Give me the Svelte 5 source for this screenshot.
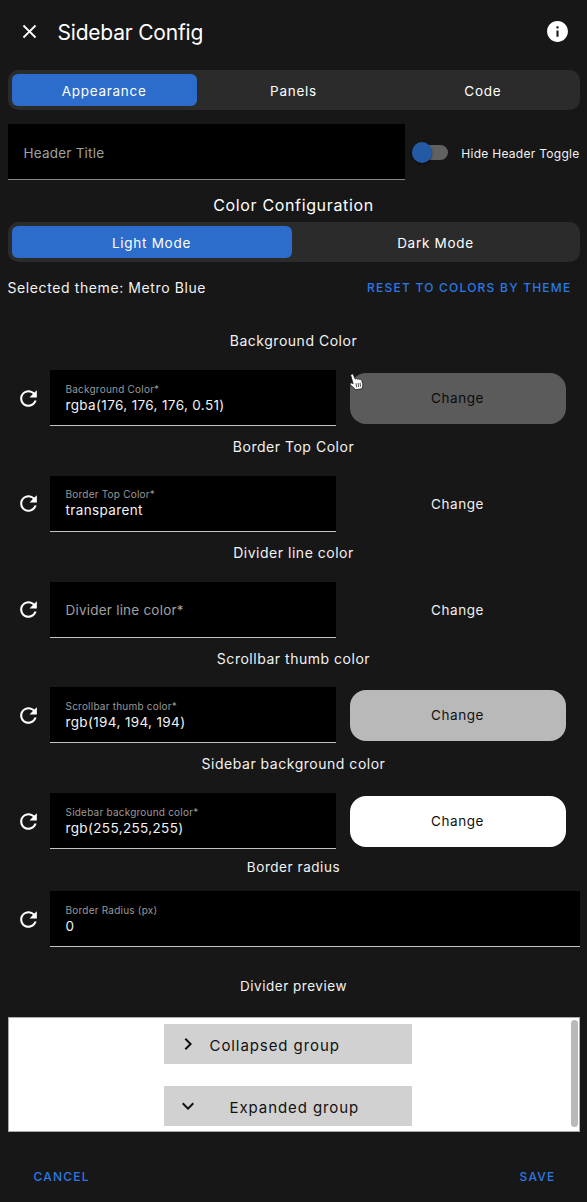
<script>
  const tabs = ['Appearance', 'Panels', 'Code'];
  const modes = ['Light Mode', 'Dark Mode'];
  const colors = [
    { title: 'Background Color', value: 'rgba(176, 176, 176, 0.51)', fill: '#5b5b5b', ink: '#0b0b0b' },
    { title: 'Border Top Color', value: 'transparent', fill: 'transparent', ink: '#f0f0f0' },
    { title: 'Divider line color', value: '', fill: 'transparent', ink: '#f0f0f0' },
    { title: 'Scrollbar thumb color', value: 'rgb(194, 194, 194)', fill: '#b9b9b9', ink: '#111' },
    { title: 'Sidebar background color', value: 'rgb(255,255,255)', fill: '#fff', ink: '#111' }
  ];
  let tab = $state(0);
  let mode = $state(0);
</script>

{#snippet reset()}
  <button class="reset" aria-label="Reset">
    <svg width="25" height="25" viewBox="0 0 24 24"><path fill="currentColor" d="M17.65 6.35C16.2 4.9 14.21 4 12 4c-4.42 0-7.99 3.58-8 8s3.58 8 8 8c3.73 0 6.84-2.55 7.73-6h-2.08c-.82 2.33-3.04 4-5.65 4-3.31 0-6-2.69-6-6s2.69-6 6-6c1.66 0 3.14.69 4.22 1.78L13 11h7V4l-2.35 2.35z" /></svg>
  </button>
{/snippet}

<main>
  <header>
    <svg class="close" width="23" height="23" viewBox="0 0 24 24"><path fill="currentColor" d="M19 6.41 17.59 5 12 10.59 6.41 5 5 6.41 10.59 12 5 17.59 6.41 19 12 13.41 17.59 19 19 17.59 13.41 12z" /></svg>
    <h1>Sidebar Config</h1>
    <svg class="info" width="25" height="25" viewBox="0 0 24 24"><path fill="currentColor" d="M12 2C6.48 2 2 6.48 2 12s4.48 10 10 10 10-4.480 10-10S17.520 2 12 2zm1 15h-2v-6h2v6zm0-8h-2V7h2v2z" /></svg>
  </header>

  <div class="segments">
    {#each tabs as name, i}
      <button class:active={tab === i} onclick={() => (tab = i)}>{name}</button>
    {/each}
  </div>

  <div class="title-row">
    <div class="field"><span class="empty">Header Title</span></div>
    <div class="switch"><span class="thumb"></span></div>
    <span class="switch-label">Hide Header Toggle</span>
  </div>

  <h2>Color Configuration</h2>

  <div class="segments">
    {#each modes as name, i}
      <button class:active={mode === i} onclick={() => (mode = i)}>{name}</button>
    {/each}
  </div>

  <div class="theme-row">
    <span>Selected theme: Metro Blue</span>
    <button class="link">RESET TO COLORS BY THEME</button>
  </div>

  {#each colors as color}
    <h3>{color.title}</h3>
    <div class="row">
      {@render reset()}
      <div class="field bright">
        {#if color.value}
          <span class="label">{color.title}*</span>
          <span class="value">{color.value}</span>
        {:else}
          <span class="empty">{color.title}*</span>
        {/if}
      </div>
      <button class="change" style:background={color.fill} style:color={color.ink}>Change</button>
    </div>
  {/each}

  <h3 class="radius">Border radius</h3>
  <div class="row wide">
    {@render reset()}
    <div class="field bright">
      <span class="label">Border Radius (px)</span>
      <span class="value">0</span>
    </div>
  </div>

  <h3 class="preview-title">Divider preview</h3>
  <section class="preview">
    <div class="groups">
      <div class="group">
        <svg width="24" height="24" viewBox="0 0 24 24"><path fill="currentColor" d="M8.59 16.58 13.17 12 8.59 7.41 10 6l6 6-6 6z" /></svg>
        <span class="collapsed">Collapsed group</span>
      </div>
      <div class="group">
        <svg width="24" height="24" viewBox="0 0 24 24"><path fill="currentColor" d="M7.41 8.58 12 13.17l4.590-4.590L18 10l-6 6-6-6z" /></svg>
        <span class="expanded">Expanded group</span>
      </div>
    </div>
    <div class="scrollbar"></div>
  </section>

  <footer>
    <button class="link">CANCEL</button>
    <button class="link">SAVE</button>
  </footer>

  <svg class="cursor" width="16" height="18" viewBox="0 0 16 18">
    <path fill="#fff" stroke="#111" stroke-width=".8" stroke-linejoin="round" d="M2.600 1.200c.8-.5 1.600 0 1.900.8l1.700 4.100c.6-.7 1.800-.6 2.200.1.700-.6 1.800-.4 2.200.3.800-.4 1.800 0 2.100.8l1 3c.4 1.300.1 2.300-.2 3.300l-.4 2.100-6.600 1.100c-1-1.800-2.300-2.600-3.900-3.900-.9-.8-1.700-1.500-1.500-2.300.2-.9 1.700-.9 3.100.2L1.900 3c-.3-.8-.1-1.400.7-1.800z" />
    <path fill="none" stroke="#222" stroke-width=".8" d="m7 10.300.6 4m1.500-4.300.5 4m1.500-4.300.4 4" />
  </svg>
</main>

<style>
  :global(body) { background: #171717; }
  * { box-sizing: border-box; }
  main {
    position: relative;
    width: 587px;
    height: 1202px;
    padding: 0 7.5px;
    overflow: hidden;
    background: #171717;
    color: #f2f2f2;
    font-family: Inter, sans-serif;
    font-size: 14px;
    letter-spacing: .52px;
  }
  button {
    margin: 0;
    padding: 0;
    border: 0;
    background: none;
    color: inherit;
    font: inherit;
    letter-spacing: inherit;
  }
  svg { display: block; flex: none; }
  h1, h2, h3 { margin: 0; font-weight: 400; }

  header { display: flex; align-items: center; height: 70.4px; padding: 0 9.5px 8px 10.5px; color: #fff; }
  h1 { flex: 1; margin-left: 16.5px; padding-top: 3px; font-size: 21px; letter-spacing: -.2px; }

  .segments {
    display: flex;
    gap: 4px;
    height: 40px;
    padding: 4px;
    border-radius: 10.5px;
    background: #2b2b2b;
    font-weight: 400;
    letter-spacing: .72px;
    font-size: 13.5px;
  }
  .segments button { flex: 1; padding-top: 1.5px; border-radius: 6px; color: #fff; }
  .segments .active { background: #2c6ccb; }

  .title-row { display: flex; align-items: center; height: 56px; margin-top: 14px; }
  .title-row .field { width: 397px; }
  .field {
    display: flex;
    flex: none;
    flex-direction: column;
    justify-content: center;
    height: 56px;
    padding: 0 16px;
    border-bottom: 1px solid #888;
    background: #000;
  }
  .bright { border-bottom-color: #c4c4c4; }
  .empty { padding-top: 2px; color: #a0a0a0; font-size: 13.5px; line-height: 18px; letter-spacing: .22px; }
  .bright .empty { padding-top: 1px; }
  .label { height: 13px; margin-top: 1px; color: #999; font-size: 10px; line-height: 13px; letter-spacing: .22px; }
  .value { height: 18px; font-size: 13.5px; line-height: 18px; letter-spacing: .36px; }
  .switch { position: relative; width: 32px; height: 14.5px; margin-left: 11px; border-radius: 8px; background: #616161; }
  .thumb { position: absolute; top: -3px; left: -4px; width: 20.5px; height: 20.5px; border-radius: 50%; background: #2459a5; box-shadow: 0 1px 2px #0008; }
  .switch-label { margin-left: auto; padding-top: 2px; font-size: 12px; letter-spacing: .28px; white-space: nowrap; }

  h2 { height: 42px; padding-top: 5px; color: #fff; font-size: 16px; font-weight: 400; line-height: 40px; letter-spacing: .65px; text-align: center; }
  .theme-row { display: flex; align-items: center; justify-content: space-between; height: 57.9px; padding: 0 8px 7.5px 0; letter-spacing: .6px; white-space: nowrap; }
  .link { color: #2b79e3; font-size: 12px; font-weight: 500; letter-spacing: 1.23px; }

  h3 { height: 49.75px; font-size: 14px; line-height: 42.5px; text-align: center; }
  .row { display: flex; align-items: center; height: 56px; }
  .row .field { width: 286px; }
  .row.wide .field { width: 530px; }
  .reset { display: grid; place-items: center; width: 42px; color: #fff; }
  .change { width: 216px; height: 51px; margin-left: 14px; border-radius: 16px; font-size: 13.5px; letter-spacing: .55px; }
  .radius { height: 42px; line-height: 36px; font-size: 13.5px; letter-spacing: .55px; }
  .preview-title { height: 70.25px; line-height: 79px; font-size: 13.5px; }

  .preview { display: flex; justify-content: center; position: relative; height: 114.5px; padding-right: 12px; border: 1px solid #aaa; background: #fff; color: #111; }
  .groups { display: flex; flex-direction: column; gap: 22px; width: 248px; margin-top: 5.5px; }
  .group { display: flex; align-items: center; height: 40px; padding: 0 12px; background: #d1d1d1; font-size: 15px; letter-spacing: .92px; }
  .group span { padding-top: 3px; }
  .collapsed { margin-left: 10px; }
  .expanded { margin-left: 30px; }
  .scrollbar { position: absolute; top: 2px; right: 1px; width: 7px; height: 107px; border-radius: 4px; background: #b9b9b9; }

  footer { display: flex; align-items: center; justify-content: space-between; height: 70px; padding: 19px 24px 0 26px; }
  .cursor { position: absolute; left: 348.5px; top: 372.5px; }
</style>
